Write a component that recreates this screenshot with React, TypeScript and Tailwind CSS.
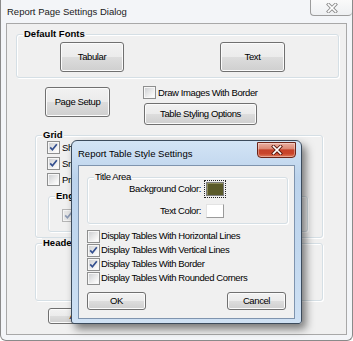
import React from 'react';

const btnCls =
  'flex items-center justify-center rounded-[3px] border border-[#707070] bg-[linear-gradient(#f2f2f2_0%,#ebebeb_50%,#dddddd_50%,#cfcfcf_100%)] shadow-[inset_0_0_0_1px_#fbfbfb] text-black leading-none whitespace-nowrap';

function Btn({ children, className = '' }: { children: React.ReactNode; className?: string }) {
  return <div className={`${btnCls} ${className}`}>{children}</div>;
}

function Check({ checked = false, disabled = false }: { checked?: boolean; disabled?: boolean }) {
  return (
    <div
      className={`w-[13px] h-[13px] shrink-0 border p-[1px] ${
        disabled ? 'border-[#b5b5b5] bg-[#f4f4f4]' : 'border-[#8e8f8f] bg-[#f7f7f7]'
      }`}
    >
      <div
        className={`w-full h-full ${
          disabled
            ? 'bg-[#e6e6e6]'
            : 'bg-[linear-gradient(135deg,#cfd1d4,#f2f2f2_70%,#ffffff)]'
        }`}
      >
        {checked && (
          <svg width="9" height="9" viewBox="0 0 9 9">
            <path
              d="M1.2 4.4 L3.4 6.8 L7.8 1.2"
              fill="none"
              stroke={disabled ? '#8d9bb5' : '#334f8f'}
              strokeWidth="1.7"
            />
          </svg>
        )}
      </div>
    </div>
  );
}

function Group({
  label,
  bold = true,
  className = '',
  children,
}: {
  label: string;
  bold?: boolean;
  className?: string;
  children?: React.ReactNode;
}) {
  return (
    <div
      className={`relative rounded-[3px] border border-[#d5dfe5] shadow-[inset_1px_1px_0_#ffffff,1px_1px_0_#ffffff] ${className}`}
    >
      <span
        className={`absolute left-[6px] px-[1px] bg-[#f0f0f0] leading-none whitespace-nowrap ${
          bold
            ? "-top-[6px] font-['Liberation_Sans',sans-serif] font-bold text-[9.5px] tracking-normal"
            : '-top-[6px]'
        }`}
      >
        {label}
      </span>
      {children}
    </div>
  );
}

function CloseGlyph({ outline, fill }: { outline: string; fill: string }) {
  return (
    <svg width="12" height="10" viewBox="0 0 12 10">
      <path d="M2.5 1.5 L9.5 8.5 M9.5 1.5 L2.5 8.5" stroke={outline} strokeWidth="3.4" strokeLinecap="square" />
      <path d="M2.5 1.5 L9.5 8.5 M9.5 1.5 L2.5 8.5" stroke={fill} strokeWidth="1.7" strokeLinecap="square" />
    </svg>
  );
}

const rows: [string, boolean][] = [
  ['Display Tables With Horizontal Lines', false],
  ['Display Tables With Vertical Lines', true],
  ['Display Tables With Border', true],
  ['Display Tables With Rounded Corners', false],
];

export default function App() {
  return (
    <div className="relative w-[353px] h-[341px] overflow-hidden bg-white text-black font-['Liberation_Sans',Arial,sans-serif] text-[9.5px] tracking-[-0.4px]">
      {/* outer window */}
      <div className="h-full flex flex-col bg-[#f3f5f8] border-x border-b border-[#8a8a8a] rounded-b-[6px]">
        <div className="h-[23px] flex shrink-0">
          <div className="pl-[6px] pt-[6px] text-[9.5px] leading-[11px] tracking-normal text-[#1a1a1a]">
            Report Page Settings Dialog
          </div>
          <div className="ml-auto w-[42px] h-[16px] flex items-center justify-center border-l border-b border-[#9c9c9c] rounded-b-[4px] bg-[linear-gradient(#fafafa,#eef0f2)]">
            <CloseGlyph outline="#8c8c8c" fill="#ffffff" />
          </div>
        </div>

        <div className="mx-[5px] h-[312px] shrink-0 border border-[#a8a8a8] bg-[#f0f0f0] flex flex-col">
          <Group label="Default Fonts" className="ml-[9px] mr-[7px] mt-[10px] h-[44px] shrink-0">
            <div className="flex pt-[7px] pl-[43px]">
              <Btn className="w-[64px] h-[30px]">Tabular</Btn>
              <Btn className="ml-[96px] w-[65px] h-[30px]">Text</Btn>
            </div>
          </Group>

          <div className="mt-[8px] flex pl-[38px] shrink-0">
            <Btn className="mt-[1px] w-[65px] h-[30px]">Page Setup</Btn>
            <div className="ml-[33px] flex flex-col">
              <div className="h-[13px] flex items-center gap-[2px]">
                <Check />
                <span className="leading-none">Draw Images With Border</span>
              </div>
              <Btn className="mt-[4px] ml-[1px] w-[113px] h-[22px]">Table Styling Options</Btn>
            </div>
          </div>

          <Group label="Grid" className="mt-[10px] ml-[28px] w-[288px] h-[103px] shrink-0">
            <div className="pt-[5px] pl-[11px] flex flex-col gap-[3px]">
              <div className="h-[13px] flex items-center gap-[2px]">
                <Check checked />
                <span className="leading-none">Show Grid</span>
              </div>
              <div className="h-[13px] flex items-center gap-[2px]">
                <Check checked />
                <span className="leading-none">Snap To Grid</span>
              </div>
              <div className="h-[13px] flex items-center gap-[2px]">
                <Check />
                <span className="leading-none">Print Grid</span>
              </div>
              <Group label="Engraving" className="mt-[7px] ml-[1px] w-[260px] h-[36px]">
                <div className="pt-[12px] pl-[13px]">
                  <Check checked disabled />
                </div>
              </Group>
            </div>
          </Group>

          <Group label="Header / Footer" className="mt-[5px] ml-[28px] w-[288px] h-[58px] shrink-0" />

          <Btn className="mt-[7px] ml-[41px] w-[65px] h-[16px] shrink-0">Apply</Btn>
        </div>
      </div>

      {/* active child dialog */}
      <div className="absolute left-[71px] top-[140px] w-[231px] h-[184px] flex flex-col rounded-t-[6px] rounded-b-[3px] border border-[#3c4b5c] bg-[linear-gradient(180deg,#d3e4f5_0%,#bcd3ec_20%,#c2d8ef_60%,#cfe1f4_100%)] shadow-[4px_5px_9px_rgba(0,0,0,0.5)]">
        <div className="h-[24px] flex shrink-0">
          <div className="pl-[6px] pt-[7px] text-[9.5px] leading-[11px] tracking-normal">
            Report Table Style Settings
          </div>
          <div className="ml-auto mt-[1px] mr-[5px] w-[39px] h-[16px] flex items-center justify-center border border-[#6b2418] rounded-b-[4px] bg-[linear-gradient(#eab0a2_0%,#dc8a76_40%,#c54129_50%,#c9452b_75%,#e0795a_100%)] shadow-[inset_0_0_0_1px_rgba(255,255,255,0.35)]">
            <CloseGlyph outline="#5b1a10" fill="#ffffff" />
          </div>
        </div>

        <div className="mx-[6px] h-[154px] shrink-0 border border-[#7f94ae] bg-[#f0f0f0] flex flex-col">
          <Group label="Title Area" bold={false} className="ml-[8px] mt-[11px] w-[201px] h-[47px] shrink-0">
            <div className="flex flex-col">
              <div className="mt-[2px] h-[18px] flex items-center">
                <span className="w-[113px] text-right leading-none">Background Color:</span>
                <div className="ml-[3px] w-[22px] h-[18px] border border-dotted border-[#222] p-[1px]">
                  <div className="w-full h-full border border-[#7d7d7d] bg-[#5a5a2a] shadow-[inset_1px_1px_0_#8c8c5a]" />
                </div>
              </div>
              <div className="mt-[6px] h-[14px] flex items-center">
                <span className="w-[113px] text-right leading-none">Text Color:</span>
                <div className="ml-[5px] w-[18px] h-[14px] border border-[#9a9a9a] border-t-[#e3e3e3] border-l-[#e3e3e3] bg-white" />
              </div>
            </div>
          </Group>

          <div className="mt-[5px] ml-[8px] flex flex-col">
            {rows.map(([t, c]) => (
              <div key={t} className="h-[14px] flex items-center gap-[1px]">
                <Check checked={c} />
                <span className="leading-none whitespace-nowrap">{t}</span>
              </div>
            ))}
          </div>

          <div className="mt-[7px] flex">
            <Btn className="ml-[8px] w-[59px] h-[18px]">OK</Btn>
            <Btn className="ml-auto mr-[8px] w-[59px] h-[18px]">Cancel</Btn>
          </div>
        </div>
      </div>
    </div>
  );
}
